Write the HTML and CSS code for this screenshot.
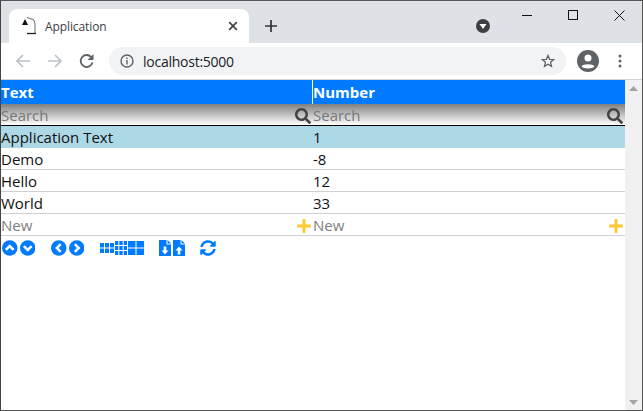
FILE: index.html
```html
<!DOCTYPE html>
<html lang="en">
<head>
<meta charset="utf-8">
<title>Application</title>
<link rel="stylesheet" href="styles.css">
</head>
<body>
<div class="window">
  <div class="tabstrip">
    <div class="tab">
      <svg class="favicon" width="17" height="22" viewBox="0 0 17 22"><path d="M2 10L5 4L8 10Z" fill="#111"/><path d="M7 2.500L13 4.500C14.500 5.500 15 7.500 15 9.500V18" fill="none" stroke="#777" stroke-width="1.100"/><path d="M7 18.500H16" stroke="#222" stroke-width="1.300"/></svg>
      <span class="tab-title">Application</span>
      <svg class="tab-close" width="10" height="10" viewBox="0 0 10 10"><path d="M1.200 1.200L8.800 8.800M8.800 1.200L1.200 8.800" stroke="#444" stroke-width="1.700"/></svg>
    </div>
    <svg class="newtab" width="12" height="12" viewBox="0 0 12 12"><path d="M6 0V12M0 6H12" stroke="#333" stroke-width="1.700"/></svg>
    <div class="spacer"></div>
    <svg class="media" width="14" height="14" viewBox="0 0 14 14"><circle cx="7" cy="7" r="7" fill="#3c4043"/><path d="M3.500 5H10.500L7 10Z" fill="#fff"/></svg>
    <div class="winctl">
      <svg width="10" height="10" viewBox="0 0 10 10"><path d="M0 5.500H10" stroke="#111"/></svg>
      <svg width="10" height="10" viewBox="0 0 10 10"><rect x=".5" y=".5" width="9" height="9" fill="none" stroke="#111"/></svg>
      <svg width="11" height="11" viewBox="0 0 11 11"><path d="M.5 .5L10.500 10.500M10.500 .5L.5 10.500" stroke="#111"/></svg>
    </div>
  </div>
  <div class="toolbar">
    <svg width="16" height="16" viewBox="0 0 16 16"><path d="M15 8H2M8 2L2 8L8 14" fill="none" stroke="#bdc1c6" stroke-width="1.700"/></svg>
    <svg width="16" height="16" viewBox="0 0 16 16"><path d="M1 8H14M8 2L14 8L8 14" fill="none" stroke="#bdc1c6" stroke-width="1.700"/></svg>
    <svg width="16" height="16" viewBox="0 0 16 16"><path d="M13.500 9.500A6 6 0 1 1 12 3.800" fill="none" stroke="#5f6368" stroke-width="1.800"/><path d="M14.500 1V7H8.500Z" fill="#5f6368"/></svg>
    <div class="omnibox">
      <svg width="14" height="14" viewBox="0 0 14 14"><circle cx="7" cy="7" r="6" fill="none" stroke="#5f6368" stroke-width="1.400"/><path d="M7 6V10.500M7 3.500V5" stroke="#5f6368" stroke-width="1.400"/></svg>
      <span class="url">localhost:5000</span>
      <svg class="star" width="14" height="14" viewBox="0 0 14 14"><path d="M7 1.500L8.600 5.300L12.700 5.600L9.600 8.300L10.500 12.300L7 10.200L3.500 12.300L4.400 8.300L1.300 5.600L5.400 5.300Z" fill="none" stroke="#5f6368" stroke-width="1.300"/></svg>
    </div>
    <svg class="avatar" width="22" height="22" viewBox="0 0 22 22"><circle cx="11" cy="11" r="11" fill="#5f6368"/><circle cx="11" cy="8" r="3.500" fill="#fff"/><path d="M4.500 16.500C6 13.500 16 13.500 17.500 16.500C15.500 19 6.500 19 4.500 16.500Z" fill="#fff"/></svg>
    <svg class="menu" width="4" height="14" viewBox="0 0 4 14"><circle cx="2" cy="2" r="1.500" fill="#5f6368"/><circle cx="2" cy="7" r="1.500" fill="#5f6368"/><circle cx="2" cy="12" r="1.500" fill="#5f6368"/></svg>
  </div>
  <div class="viewport">
    <main class="page">
      <div class="row head"><div class="cell first">Text</div><div class="cell">Number</div></div>
      <div class="row search">
        <div class="cell split first"><span>Search</span><svg width="16" height="16" viewBox="0 0 512 512"><path fill="#444" d="M505 442.700L405.300 343c-4.500-4.500-10.600-7-17-7H372c27.600-35.300 44-79.700 44-128C416 93.100 322.900 0 208 0S0 93.100 0 208s93.100 208 208 208c48.300 0 92.700-16.400 128-44v16.300c0 6.400 2.500 12.500 7 17l99.700 99.700c9.400 9.400 24.600 9.400 33.900 0l28.300-28.300c9.400-9.400 9.400-24.600.1-34zM208 336c-70.700 0-128-57.200-128-128 0-70.700 57.200-128 128-128 70.700 0 128 57.200 128 128 0 70.700-57.200 128-128 128z"/></svg></div>
        <div class="cell split last"><span>Search</span><svg width="16" height="16" viewBox="0 0 512 512"><path fill="#444" d="M505 442.700L405.300 343c-4.500-4.500-10.600-7-17-7H372c27.600-35.300 44-79.700 44-128C416 93.100 322.900 0 208 0S0 93.100 0 208s93.100 208 208 208c48.300 0 92.700-16.400 128-44v16.300c0 6.400 2.500 12.500 7 17l99.700 99.700c9.400 9.400 24.600 9.400 33.900 0l28.300-28.300c9.400-9.400 9.400-24.600.1-34zM208 336c-70.700 0-128-57.200-128-128 0-70.700 57.200-128 128-128 70.700 0 128 57.200 128 128 0 70.700-57.200 128-128 128z"/></svg></div>
      </div>
      <div class="row data selected"><div class="cell first">Application Text</div><div class="cell">1</div></div>
      <div class="row data"><div class="cell first">Demo</div><div class="cell">-8</div></div>
      <div class="row data"><div class="cell first">Hello</div><div class="cell">12</div></div>
      <div class="row data"><div class="cell first">World</div><div class="cell">33</div></div>
      <div class="row data new">
        <div class="cell split first"><span>New</span><svg width="14" height="16" viewBox="0 0 448 512"><path fill="#ffc832" d="M416 208H272V64c0-17.670-14.330-32-32-32h-32c-17.670 0-32 14.330-32 32v144H32c-17.670 0-32 14.330-32 32v32c0 17.670 14.330 32 32 32h144v144c0 17.670 14.330 32 32 32h32c17.670 0 32-14.330 32-32V304h144c17.670 0 32-14.330 32-32v-32c0-17.670-14.330-32-32-32z"/></svg></div>
        <div class="cell split last"><span>New</span><svg width="14" height="16" viewBox="0 0 448 512"><path fill="#ffc832" d="M416 208H272V64c0-17.670-14.330-32-32-32h-32c-17.670 0-32 14.330-32 32v144H32c-17.670 0-32 14.330-32 32v32c0 17.670 14.330 32 32 32h144v144c0 17.670 14.330 32 32 32h32c17.670 0 32-14.330 32-32V304h144c17.670 0 32-14.330 32-32v-32c0-17.670-14.330-32-32-32z"/></svg></div>
      </div>
      <div class="actions">
        <div class="group">
          <svg width="15.500" height="16" viewBox="0 0 16 16"><circle cx="8" cy="8" r="8" fill="#007bff"/><path d="M4 10L8 6L12 10" fill="none" stroke="#fff" stroke-width="2.600"/></svg>
          <svg width="15.500" height="16" viewBox="0 0 16 16"><circle cx="8" cy="8" r="8" fill="#007bff"/><path d="M4 6L8 10L12 6" fill="none" stroke="#fff" stroke-width="2.600"/></svg>
        </div>
        <div class="group">
          <svg width="15.500" height="16" viewBox="0 0 16 16"><circle cx="8" cy="8" r="8" fill="#007bff"/><path d="M10 4L6 8L10 12" fill="none" stroke="#fff" stroke-width="2.600"/></svg>
          <svg width="15.500" height="16" viewBox="0 0 16 16"><circle cx="8" cy="8" r="8" fill="#007bff"/><path d="M6 4L10 8L6 12" fill="none" stroke="#fff" stroke-width="2.600"/></svg>
        </div>
        <div class="group tight">
          <svg width="14" height="16" viewBox="0 0 14 16" fill="#007bff"><path d="M0 3h4v4.500H0zM5 3h4v4.500H5zM10 3h4v4.500h-4zM0 8.500h4V13H0zM5 8.500h4V13H5zM10 8.500h4V13h-4z"/></svg>
          <svg width="12" height="16" viewBox="0 0 12 16" fill="#007bff"><path d="M0 1h3.300v4H0zM4.300 1h3.400v4H4.300zM8.700 1H12v4H8.700zM0 6h3.300v4H0zM4.300 6h3.400v4H4.300zM8.700 6H12v4H8.700zM0 11h3.300v4H0zM4.300 11h3.400v4H4.300zM8.700 11H12v4H8.700z"/></svg>
          <svg width="16" height="16" viewBox="0 0 16 16" fill="#007bff"><path d="M0 1h7.500v6.500H0zM8.500 1H16v6.500H8.500zM0 8.500h7.500V15H0zM8.500 8.500H16V15H8.500z"/></svg>
        </div>
        <div class="group file">
          <svg width="12" height="16" viewBox="0 0 12 16"><path fill="#007bff" d="M0 0H7.500V4.500H12V16H0Z M8.500 0L12 3.500H8.500Z"/><path d="M6 6.500V11.500" stroke="#fff" stroke-width="2.600"/><path d="M2.500 10.500H9.500L6 14.500Z" fill="#fff"/></svg>
          <svg width="12" height="16" viewBox="0 0 12 16"><path fill="#007bff" d="M0 0H7.500V4.500H12V16H0Z M8.500 0L12 3.500H8.500Z"/><path d="M6 10V14.500" stroke="#fff" stroke-width="2.600"/><path d="M2.500 10.500H9.500L6 6.500Z" fill="#fff"/></svg>
        </div>
        <div class="group">
          <svg width="16" height="16" viewBox="0 0 512 512"><path fill="#007bff" d="M370.720 133.280C339.458 104.008 298.888 87.962 255.848 88c-77.458.068-144.328 53.178-162.791 126.850-1.344 5.363-6.122 9.150-11.651 9.150H24.103c-7.498 0-13.194-6.807-11.807-14.176C33.933 94.924 134.813 8 256 8c66.448 0 126.791 26.136 171.315 68.685L463.030 40.970C478.149 25.851 504 36.559 504 57.941V192c0 13.255-10.745 24-24 24H345.941c-21.382 0-32.090-25.851-16.971-40.971l41.750-41.749zM32 296h134.059c21.382 0 32.090 25.851 16.971 40.971l-41.750 41.750c31.262 29.273 71.835 45.319 114.876 45.280 77.418-.07 144.315-53.144 162.787-126.849 1.344-5.363 6.122-9.150 11.651-9.150h57.304c7.498 0 13.194 6.807 11.807 14.176C478.067 417.076 377.187 504 256 504c-66.448 0-126.791-26.136-171.315-68.685L48.970 471.030C33.851 486.149 8 475.441 8 454.059V320c0-13.255 10.745-24 24-24z"/></svg>
        </div>
      </div>
    </main>
    <div class="scrollbar">
      <svg width="9" height="5" viewBox="0 0 9 5"><path d="M4.500 0L9 5H0Z" fill="#a3a3a3"/></svg>
      <svg width="9" height="5" viewBox="0 0 9 5"><path d="M0 0H9L4.500 5Z" fill="#a3a3a3"/></svg>
    </div>
  </div>
</div>
</body>
</html>
```
FILE: styles.css
```css
* { box-sizing: border-box; }
html, body { margin: 0; padding: 0; }
body { width: 643px; height: 411px; overflow: hidden; background: #fff; font-family: "Open Sans", "Noto Sans", sans-serif; }
svg { display: block; flex: none; }

.window { width: 643px; height: 411px; display: flex; flex-direction: column; border: 1px solid #555; border-left-color: #444; }

.tabstrip { height: 42px; background: #dee1e6; display: flex; align-items: flex-start; padding-left: 8px; flex: none; }
.tab { width: 240px; height: 34px; margin-top: 8px; background: #fff; border-radius: 8px 8px 0 0; display: flex; align-items: center; padding: 0 11px; }
.tab-title { font: 12px "Open Sans", sans-serif; color: #3c4043; margin-left: 8px; flex: 1; letter-spacing: -.1px; }
.newtab { margin: 19px 0 0 16px; }
.spacer { flex: 1; }
.media { margin: 18px 15px 0 0; }
.winctl { width: 138px; display: flex; justify-content: space-between; padding: 9px 17px 0 18px; align-items: flex-start; margin-left: -1px; }

.toolbar { height: 37px; background: #fff; display: flex; align-items: center; padding: 0 14px; gap: 16px; flex: none; border-bottom: 1px solid #d4d4d4; }
.omnibox { width: 457px; height: 28px; background: #f1f3f4; border-radius: 14px; display: flex; align-items: center; padding: 0 11px; margin-left: -2px; margin-right: -5px; }
.url { font: 14px "Open Sans", sans-serif; color: #202124; margin-left: 9px; flex: 1; letter-spacing: -.25px; }
.menu { margin-left: 3px; }

.viewport { flex: 1; display: flex; min-height: 0; }
.page { width: 624px; flex: none; background: #fff; font-size: 15px; color: #111; }
.scrollbar { flex: 1; background: #f1f1f1; display: flex; flex-direction: column; justify-content: space-between; align-items: center; padding: 6px 0 5px; }

.row { display: grid; grid-template-columns: 311px 1fr; }
.cell { padding: 0 1px; min-width: 0; line-height: 23px; white-space: nowrap; }
.first { padding-left: 0; }
.last { padding-right: 2px; }
.split { display: flex; justify-content: space-between; align-items: center; }
.head { height: 24px; background: #007bff; color: #fff; font-weight: 700; }
.head .cell { line-height: 24px; }
.head .cell + .cell { border-left: 1px solid #fff; padding-left: 0; }
.search { height: 22px; background: linear-gradient(#808080, #fff); border-bottom: 1px solid #000; color: #777; }
.data { height: 22px; border-bottom: 1px solid #d0d0d0; }
.selected { background: #add8e6; border-bottom: 0; }
.new { color: #808080; }
.actions { display: flex; align-items: center; height: 24px; padding: 0 1px; gap: 16px; }
.group { display: flex; gap: 2px; }
.group.tight { gap: 1px; margin-right: -1px; }
.group.file { margin-right: -1px; }
```
